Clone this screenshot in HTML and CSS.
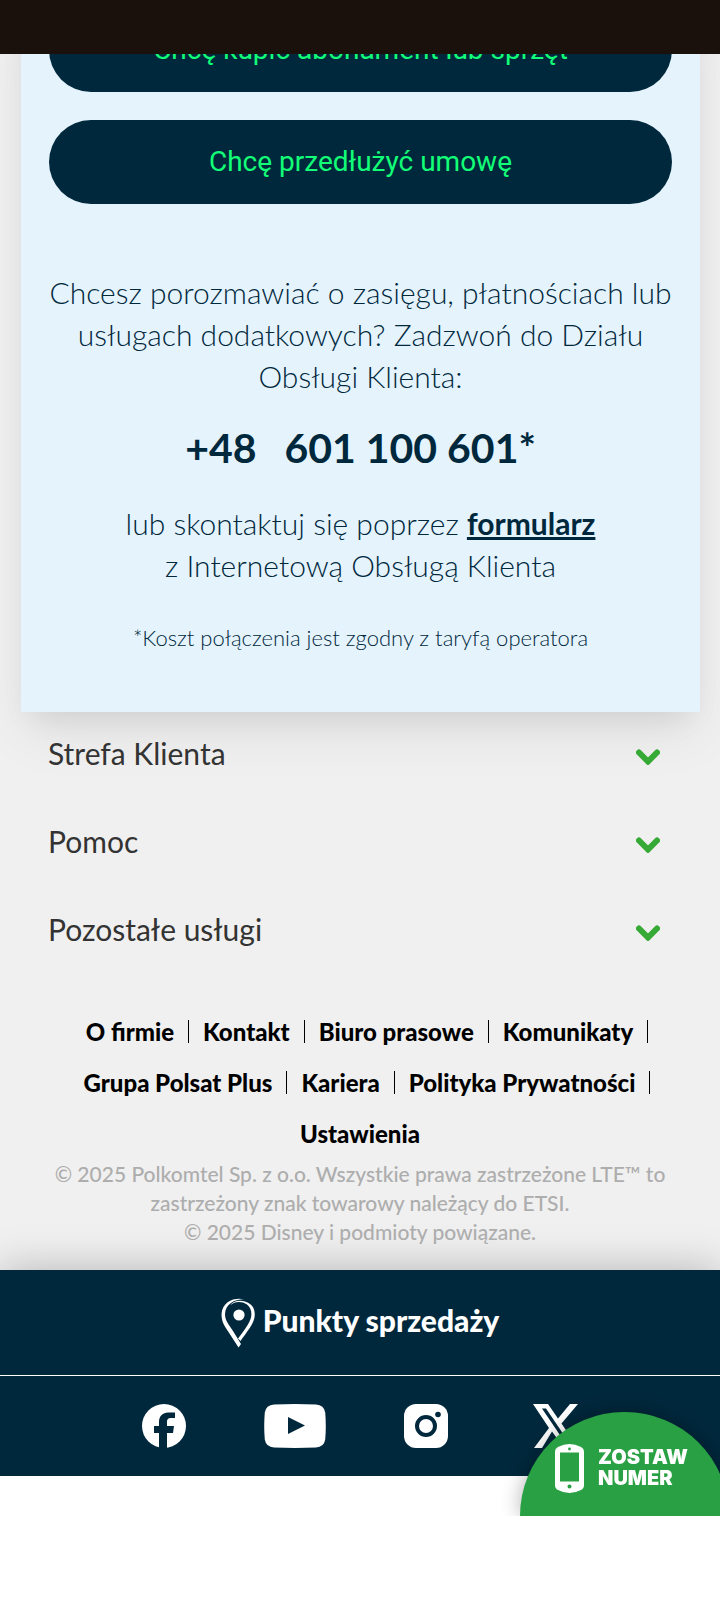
FILE: index.html
```html
<!DOCTYPE html>
<html lang="pl">
<head>
<meta charset="utf-8">
<meta name="viewport" content="width=device-width, initial-scale=1">
<title>Kontakt</title>
<link rel="stylesheet" href="styles.css">
</head>
<body>
<header class="topbar"></header>
<div class="page">
  <main class="contact">
    <div class="actions">
      <button class="action" type="button">Chcę kupić abonament lub sprzęt</button>
      <button class="action" type="button">Chcę przedłużyć umowę</button>
    </div>
    <p class="lead">Chcesz porozmawiać o zasięgu, płatnościach lub<br>usługach dodatkowych? Zadzwoń do Działu<br>Obsługi Klienta:</p>
    <p class="phone"><span>+48</span><span>601 100 601*</span></p>
    <p class="lead">lub skontaktuj się poprzez <a class="form-link" href="#">formularz</a><br>z Internetową Obsługą Klienta</p>
    <p class="note">*Koszt połączenia jest zgodny z taryfą operatora</p>
  </main>
  <nav class="sections">
    <button class="section" type="button">Strefa Klienta<svg class="chevron" viewBox="0 0 24 16"><path d="M3 3.500l9 9 9-9"/></svg></button>
    <button class="section" type="button">Pomoc<svg class="chevron" viewBox="0 0 24 16"><path d="M3 3.500l9 9 9-9"/></svg></button>
    <button class="section" type="button">Pozostałe usługi<svg class="chevron" viewBox="0 0 24 16"><path d="M3 3.500l9 9 9-9"/></svg></button>
  </nav>
  <ul class="links">
    <li><a href="#">O firmie</a></li>
    <li><a href="#">Kontakt</a></li>
    <li><a href="#">Biuro prasowe</a></li>
    <li><a href="#">Komunikaty</a></li>
    <li><a href="#">Grupa Polsat Plus</a></li>
    <li><a href="#">Kariera</a></li>
    <li><a href="#">Polityka Prywatności</a></li>
    <li><a href="#">Ustawienia</a></li>
  </ul>
  <p class="legal">© 2025 Polkomtel Sp. z o.o. Wszystkie prawa zastrzeżone LTE™ to<br>zastrzeżony znak towarowy należący do ETSI.<br>© 2025 Disney i podmioty powiązane.</p>
  <footer class="footer">
    <a class="stores" href="#">
      <svg class="pin" viewBox="0 0 34 50">
        <path d="M23 1.300C14 -.8 1.500 3 .5 16c0 8 3 12 7 18l10 15.500 2.500-3.500-8-13C7.500 26 4 22.500 4 16 4.500 6 13 1.500 23 1.300z"/>
        <path d="M9 7.500C12 4 20 2 26 6.500c4 3 5 8 4 13-1.500 6-6.500 12.500-13 21l2.500 2.500C26 33.500 32 27 33.500 19.500c1-7-1-11.500-6-14.500C20 1 12 3 9 7.500z"/>
        <circle cx="18" cy="17" r="5.600"/>
      </svg>
      <span>Punkty sprzedaży</span>
    </a>
    <div class="social">
      <a href="#" aria-label="Facebook"><svg width="44" height="44" viewBox="0 0 44 44"><circle cx="22" cy="22" r="22"/><path class="cut" d="M17 44V29h-5v-7h5v-4c0-6 4-9.500 9-9.500h7V14h-3.500c-3.500 0-4.500 1.500-4.500 4v4h7l-1 7h-6v15z"/></svg></a>
      <a href="#" aria-label="YouTube"><svg width="62" height="44" viewBox="0 0 62 44"><path d="M10 .4Q31-.4 52 .4q8 .5 9.200 8 1.200 13.600 0 27.200-1.200 7.500-9.200 8-21 .8-42 0-8-.5-9.200-8-1.200-13.600 0-27.200Q2 .9 10 .4z"/><path class="cut" d="M24 13v17l17-8.500z"/></svg></a>
      <a href="#" aria-label="Instagram"><svg width="44" height="44" viewBox="0 0 44 44"><rect width="44" height="44" rx="12"/><circle class="ring" cx="22" cy="22" r="9"/><circle class="cut" cx="34" cy="10.500" r="2.800"/></svg></a>
      <a href="#" aria-label="X"><svg width="53" height="44" viewBox="-7 0 53 44"><path d="M0 0h15l10 14.500L37 0h8L28.500 19.500 45 44H31L19 27.500 9 44H1l15-20z"/><path class="cut" d="M9 4.500h4L37 40h-4z"/></svg></a>
    </div>
  </footer>
</div>
<button class="callback" type="button">
  <svg class="mobile" width="29" height="49" viewBox="0 0 29 49"><path fill-rule="evenodd" d="M3 3Q14.500-3 26 3q3 1.500 3 5v33q0 3.500-3 5-11.500 6-23 0-3-1.500-3-5V8q0-3.500 3-5zM5 8.500v29h19v-29z"/><circle class="dot" cx="14.500" cy="5" r="1.400"/><circle class="dot" cx="14.500" cy="42.500" r="2"/></svg>
  <span>ZOSTAW<br>NUMER</span>
</button>
</body>
</html>
```
FILE: styles.css
```css
* { box-sizing: border-box; }
body { margin: 0; background: #fff; font-family: Lato, "Noto Sans", sans-serif; color: #00283c; overflow-x: hidden; }
p, ul { margin: 0; padding: 0; }
button { border: 0; margin: 0; font: inherit; cursor: pointer; }
a { color: inherit; text-decoration: none; }

.topbar { position: fixed; top: 0; left: 0; right: 0; height: 54px; background: #1a110c; z-index: 5; }
.page { background: #f0f0f0; }

.contact { margin: 0 20px 0 21px; padding: 8px 28px 60px; background: #e4f3fc; box-shadow: 0 25px 50px rgba(0, 0, 0, .06), 0 15px 30px -12px rgba(0, 0, 0, .1); text-align: center; }
.actions { display: flex; flex-direction: column; gap: 28px; margin-bottom: 67px; }
.action { height: 84px; padding: 0 0 2px; border-radius: 42px; background: #00283c; color: #12ff77; font: 28px Roboto, sans-serif; }
.lead { font-size: 30px; line-height: 42px; font-weight: 300; white-space: nowrap; }
.phone { display: flex; justify-content: center; gap: 28px; margin: 20px 0 23px; font-size: 41px; line-height: 62px; font-weight: 700; }
.form-link { font-weight: 700; text-decoration: underline; }
.note { margin-top: 38px; font-size: 22px; line-height: 28px; font-weight: 300; }

.sections { padding: 0 60px 0 48px; }
.section { display: flex; align-items: center; justify-content: space-between; width: 100%; height: 88px; padding: 0 0 6px; background: none; color: #333; font-size: 30px; }
.chevron { width: 24px; height: 16px; margin-top: 8px; fill: none; stroke: #36a936; stroke-width: 6; stroke-linecap: round; }

.links { display: flex; flex-wrap: wrap; justify-content: center; padding: 30px 40px 0; list-style: none; color: #000; font-size: 24px; font-weight: 900; line-height: 23px; }
.links li { margin: 14px 0; padding: 0 14px; border-right: 1px solid #000; }
.links li:last-child { border: 0; }
.legal { padding: 0 40px 24px; color: #adadad; font-size: 21px; line-height: 29px; font-weight: 500; text-align: center; }

.footer { background: #00283c; color: #fff; box-shadow: 0 0 40px rgba(0, 0, 0, .25); }
.footer svg { display: block; fill: #fff; }
.footer .cut { fill: #00283c; }
.footer .ring { fill: none; stroke: #00283c; stroke-width: 4; }
.stores { display: flex; align-items: center; justify-content: center; gap: 8px; height: 105px; font-size: 30px; font-weight: 900; }
.stores span { padding-bottom: 6px; }
.pin { width: 34px; height: 50px; }
.social { display: flex; justify-content: center; gap: 78px; padding: 28px 0; border-top: 1px solid #fff; }

.callback { position: fixed; right: -9px; bottom: 84px; display: flex; align-items: center; gap: 14px; width: 209px; height: 104px; padding: 8px 0 0 35px; border-radius: 104px 104px 0 0; background: #28a043; color: #fff; box-shadow: 0 0 20px rgba(0, 0, 0, .3); clip-path: inset(-30px -30px 0 -30px); font: 900 20px/21px Inter, sans-serif; text-align: left; }
.mobile { fill: #fff; }
.mobile .dot { fill: #28a043; }
```
